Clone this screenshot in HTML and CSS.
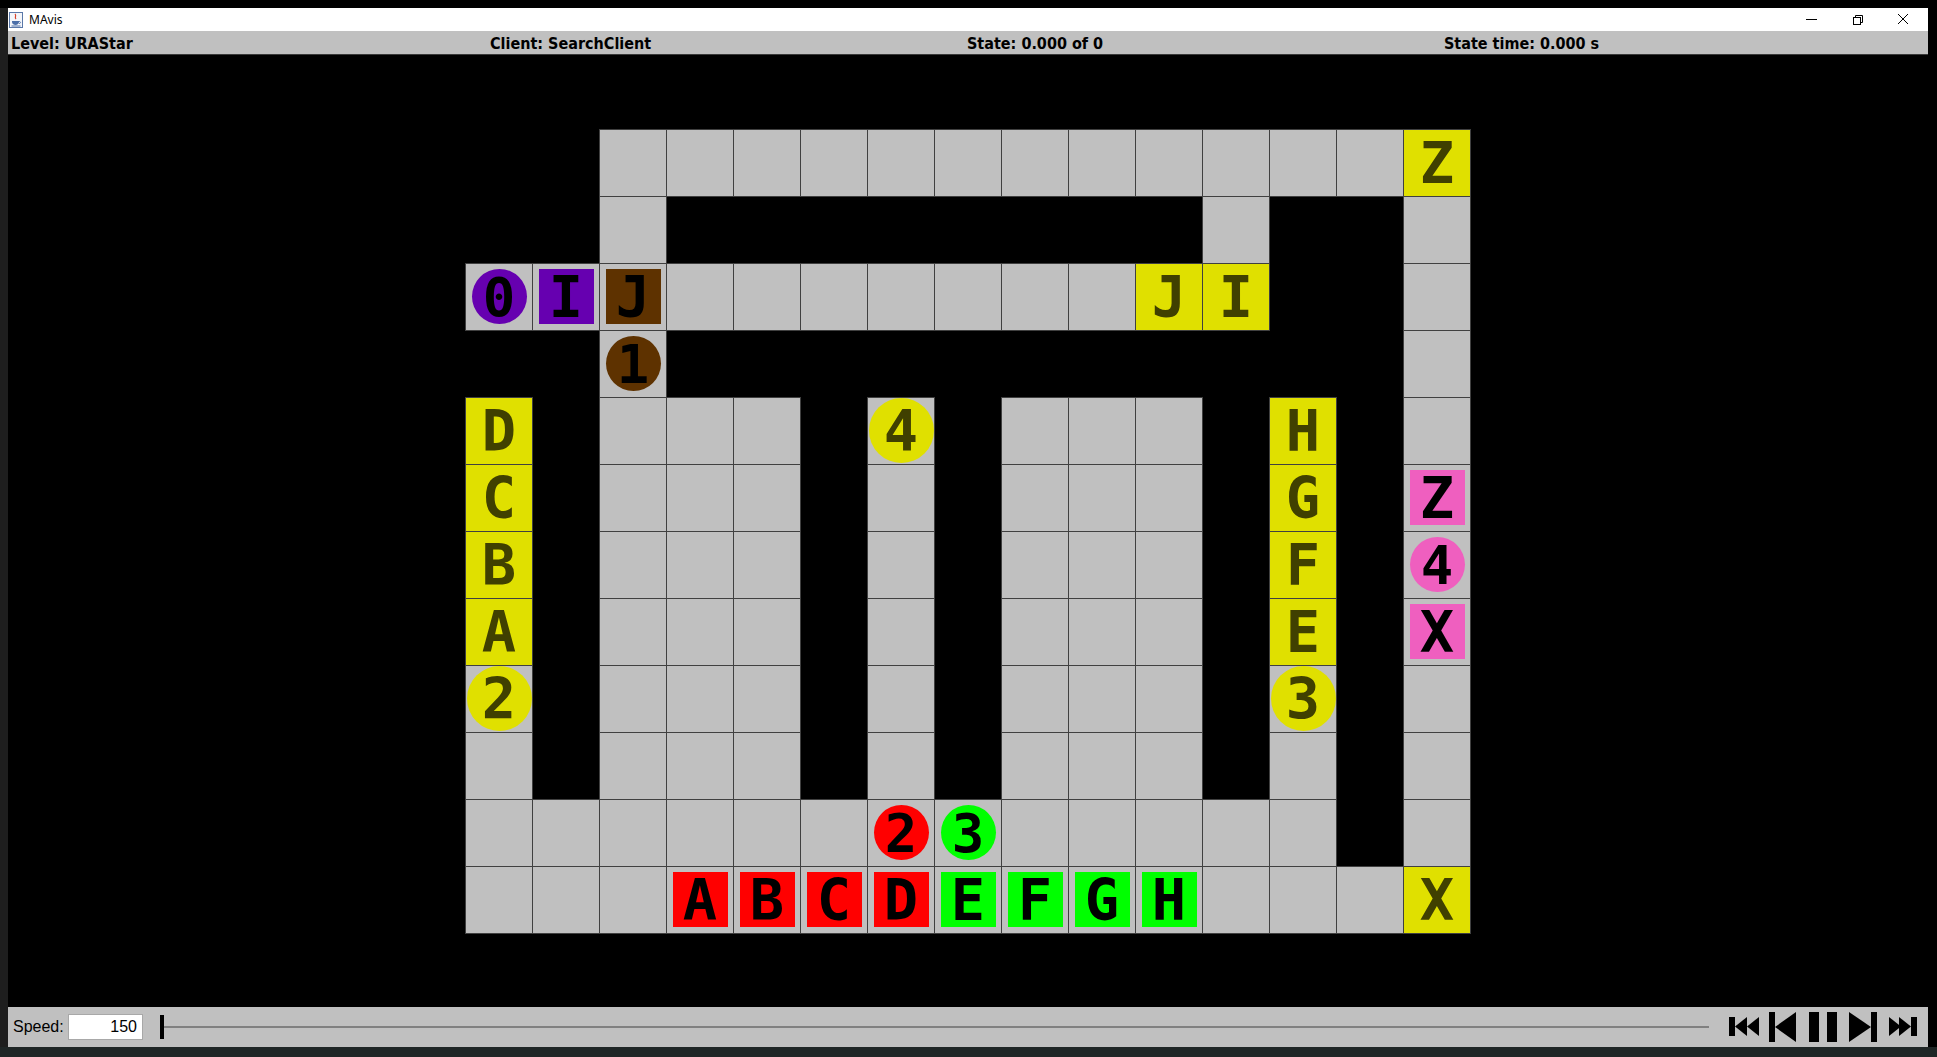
FILE: index.html
```html
<!DOCTYPE html>
<html>
<head>
<meta charset="utf-8">
<title>MAvis</title>
<link rel="stylesheet" href="styles.css">
</head>
<body>
<div class="screen">
  <div class="top-strip"></div>
  <div class="middle">
    <div class="left-strip"></div>
    <div class="window">
      <div class="titlebar">
        <svg class="java" width="14" height="16" viewBox="0 0 14 16">
          <rect x="0.5" y="0.5" width="13" height="15" fill="#f4f6fa" stroke="#5a78a8"/>
          <path d="M6 2 C8 4 5 5 7 7" stroke="#d8402a" stroke-width="1.2" fill="none"/>
          <path d="M3 9 H10 V10 C10 12 8 13 6.5 13 C5 13 3 12 3 10 Z" fill="#4a6ea8"/>
          <path d="M10 9.5 C12 9.5 12 11.5 10 11.5" stroke="#4a6ea8" fill="none"/>
          <rect x="2.5" y="13.5" width="9" height="1" fill="#4a6ea8"/>
        </svg>
        <span class="title">MAvis</span>
        <div class="spacer"></div>
        <svg class="winctl" width="138" height="23" viewBox="0 0 138 23">
          <line x1="16" y1="11.5" x2="27" y2="11.5" stroke="#000" stroke-width="1"/>
          <rect x="63.5" y="9.5" width="7" height="7" fill="none" stroke="#000"/>
          <path d="M65.5 9.5 V7.5 H72.5 V14.5 H70.5" fill="none" stroke="#000"/>
          <path d="M108 6 L118 16 M118 6 L108 16" stroke="#000" stroke-width="1"/>
        </svg>
      </div>
      <div class="statusbar">
        <div class="stat">Level: URAStar</div>
        <div class="stat">Client: SearchClient</div>
        <div class="stat">State: 0.000 of 0</div>
        <div class="stat">State time: 0.000 s</div>
      </div>
      <div class="canvas">
        <div class="board">
          <!-- row 0 -->
          <i></i><i></i><i class="c"></i><i class="c"></i><i class="c"></i><i class="c"></i><i class="c"></i><i class="c"></i><i class="c"></i><i class="c"></i><i class="c"></i><i class="c"></i><i class="c"></i><i class="c"></i><i class="c g">Z</i>
          <!-- row 1 -->
          <i></i><i></i><i class="c"></i><i></i><i></i><i></i><i></i><i></i><i></i><i></i><i></i><i class="c"></i><i></i><i></i><i class="c"></i>
          <!-- row 2 -->
          <i class="c"><b class="ag purple">0</b></i><i class="c"><b class="bx purple">I</b></i><i class="c"><b class="bx brown">J</b></i><i class="c"></i><i class="c"></i><i class="c"></i><i class="c"></i><i class="c"></i><i class="c"></i><i class="c"></i><i class="c g">J</i><i class="c g">I</i><i></i><i></i><i class="c"></i>
          <!-- row 3 -->
          <i></i><i></i><i class="c"><b class="ag brown">1</b></i><i></i><i></i><i></i><i></i><i></i><i></i><i></i><i></i><i></i><i></i><i></i><i class="c"></i>
          <!-- row 4 -->
          <i class="c g">D</i><i></i><i class="c"></i><i class="c"></i><i class="c"></i><i></i><i class="c"><b class="ga">4</b></i><i></i><i class="c"></i><i class="c"></i><i class="c"></i><i></i><i class="c g">H</i><i></i><i class="c"></i>
          <!-- row 5 -->
          <i class="c g">C</i><i></i><i class="c"></i><i class="c"></i><i class="c"></i><i></i><i class="c"></i><i></i><i class="c"></i><i class="c"></i><i class="c"></i><i></i><i class="c g">G</i><i></i><i class="c"><b class="bx pink">Z</b></i>
          <!-- row 6 -->
          <i class="c g">B</i><i></i><i class="c"></i><i class="c"></i><i class="c"></i><i></i><i class="c"></i><i></i><i class="c"></i><i class="c"></i><i class="c"></i><i></i><i class="c g">F</i><i></i><i class="c"><b class="ag pink">4</b></i>
          <!-- row 7 -->
          <i class="c g">A</i><i></i><i class="c"></i><i class="c"></i><i class="c"></i><i></i><i class="c"></i><i></i><i class="c"></i><i class="c"></i><i class="c"></i><i></i><i class="c g">E</i><i></i><i class="c"><b class="bx pink">X</b></i>
          <!-- row 8 -->
          <i class="c"><b class="ga">2</b></i><i></i><i class="c"></i><i class="c"></i><i class="c"></i><i></i><i class="c"></i><i></i><i class="c"></i><i class="c"></i><i class="c"></i><i></i><i class="c"><b class="ga">3</b></i><i></i><i class="c"></i>
          <!-- row 9 -->
          <i class="c"></i><i></i><i class="c"></i><i class="c"></i><i class="c"></i><i></i><i class="c"></i><i></i><i class="c"></i><i class="c"></i><i class="c"></i><i></i><i class="c"></i><i></i><i class="c"></i>
          <!-- row 10 -->
          <i class="c"></i><i class="c"></i><i class="c"></i><i class="c"></i><i class="c"></i><i class="c"></i><i class="c"><b class="ag red">2</b></i><i class="c"><b class="ag green">3</b></i><i class="c"></i><i class="c"></i><i class="c"></i><i class="c"></i><i class="c"></i><i></i><i class="c"></i>
          <!-- row 11 -->
          <i class="c"></i><i class="c"></i><i class="c"></i><i class="c"><b class="bx red">A</b></i><i class="c"><b class="bx red">B</b></i><i class="c"><b class="bx red">C</b></i><i class="c"><b class="bx red">D</b></i><i class="c"><b class="bx green">E</b></i><i class="c"><b class="bx green">F</b></i><i class="c"><b class="bx green">G</b></i><i class="c"><b class="bx green">H</b></i><i class="c"></i><i class="c"></i><i class="c"></i><i class="c g">X</i>
        </div>
      </div>
      <div class="speedbar">
        <span class="speed-label">Speed:</span>
        <div class="speed-field">150</div>
        <div class="slider"><div class="thumb"></div><div class="track"></div></div>
        <svg class="controls" width="188" height="30" viewBox="0 0 188 30">
          <rect x="0" y="5" width="6" height="19" fill="#000"/>
          <polygon points="6,14.5 18,5 18,24" fill="#000"/>
          <polygon points="18,14.5 30,5 30,24" fill="#000"/>
          <rect x="40" y="0" width="6" height="30" fill="#000"/>
          <polygon points="46,15 67,0 67,30" fill="#000"/>
          <rect x="80" y="0" width="10" height="30" fill="#000"/>
          <rect x="98" y="0" width="10" height="30" fill="#000"/>
          <polygon points="120,0 142,15 120,30" fill="#000"/>
          <rect x="142" y="0" width="6" height="30" fill="#000"/>
          <polygon points="160,5 172,14.5 160,24" fill="#000"/>
          <polygon points="170,5 182,14.5 170,24" fill="#000"/>
          <rect x="182" y="5" width="6" height="19" fill="#000"/>
        </svg>
      </div>
    </div>
    <div class="right-strip"></div>
  </div>
  <div class="taskbar"></div>
</div>
</body>
</html>
```

FILE: styles.css
```css
html, body {
  margin: 0;
  padding: 0;
  background: #000;
}

.screen {
  width: 1937px;
  height: 1057px;
  display: flex;
  flex-direction: column;
  overflow: hidden;
}

.top-strip {
  height: 8px;
  background: #000;
}

.middle {
  display: flex;
  height: 1039px;
}

.left-strip {
  width: 8px;
  background: #1e1e1e;
}

.right-strip {
  width: 9px;
  background: #000;
}

.window {
  width: 1920px;
  display: flex;
  flex-direction: column;
}

.titlebar {
  height: 23px;
  background: #fff;
  display: flex;
  align-items: center;
  font-family: "Noto Sans", "Liberation Sans", sans-serif;
  font-size: 12px;
  color: #000;
}

.java {
  margin-left: 1px;
  margin-right: 6px;
}

.spacer {
  flex: 1;
}

.statusbar {
  height: 23px;
  background: #c0c0c0;
  border-bottom: 1px solid #3a3a3a;
  display: grid;
  grid-template-columns: 479px 477px 477px 1fr;
  align-items: center;
  font-family: "DejaVu Sans Condensed", "DejaVu Sans", sans-serif;
  font-stretch: condensed;
  font-weight: bold;
  font-size: 16px;
  color: #000;
}

.stat {
  padding-left: 3px;
  padding-top: 1px;
}

.canvas {
  flex: 1;
  background: #000;
  display: flex;
  align-items: center;
  justify-content: center;
}

.board {
  width: 1006px;
  height: 805px;
  display: grid;
  grid-template-columns: repeat(15, 67px);
  grid-template-rows: repeat(12, 67px);
  align-content: start;
  justify-content: start;
}

.board i {
  display: block;
  width: 68px;
  height: 68px;
  box-sizing: border-box;
  font-style: normal;
}

.board .c {
  border: 1px solid #404040;
  background: #c0c0c0;
  display: flex;
  align-items: center;
  justify-content: center;
  font-family: "DejaVu Sans Mono", monospace;
  font-weight: bold;
}

.board .g {
  background: #e0e000;
  color: #404000;
  font-size: 57px;
  line-height: 1;
  padding-top: 2px;
}

.bx, .ag, .ga {
  display: flex;
  align-items: center;
  justify-content: center;
  font-weight: bold;
  line-height: 1;
  padding-top: 2px;
  box-sizing: border-box;
}

.bx {
  width: 55px;
  height: 55px;
  font-size: 57px;
  color: #000;
}

.ag {
  width: 55px;
  height: 55px;
  border-radius: 50%;
  font-size: 54px;
  color: #000;
}

.ga {
  width: 65px;
  height: 65px;
  border-radius: 50%;
  background: #e0e000;
  color: #404000;
  font-size: 57px;
}

.red { background: #ff0000; }
.green { background: #00ff00; }
.purple { background: #6600b0; }
.brown { background: #5e3200; }
.pink { background: #ef5fbf; }

.speedbar {
  height: 40px;
  background: #c0c0c0;
  display: flex;
  align-items: center;
  font-family: "Liberation Sans", Arial, sans-serif;
  color: #000;
}

.speed-label {
  font-size: 16px;
  margin-left: 5px;
  width: 55px;
}

.speed-field {
  width: 75px;
  height: 26px;
  box-sizing: border-box;
  background: #fff;
  border: 1px solid #a8a8a8;
  font-size: 16px;
  text-align: right;
  padding-right: 5px;
  line-height: 24px;
}

.slider {
  margin-left: 17px;
  width: 1549px;
  height: 24px;
  display: flex;
  align-items: center;
}

.thumb {
  width: 4px;
  height: 24px;
  background: #000;
}

.track {
  flex: 1;
  height: 2px;
  background: #808080;
}

.controls {
  margin-left: 20px;
}

.taskbar {
  height: 10px;
  background: #1f2626;
}
```
